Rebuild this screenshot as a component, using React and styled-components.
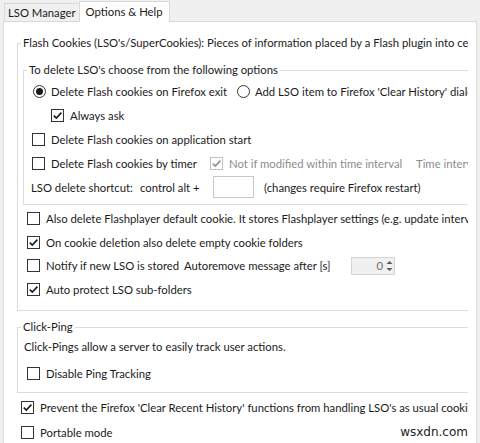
import React from 'react';
import styled, { createGlobalStyle } from 'styled-components';

const GlobalStyle = createGlobalStyle`
  html, body {
    margin: 0;
    padding: 0;
    background: #f0f0f0;
  }
  body {
    font-family: Lato, "Open Sans", sans-serif;
    font-size: 11.3px;
    color: #1b1b1b;
    width: 480px;
    height: 443px;
    overflow: hidden;
  }
`;

const Window = styled.div`
  position: relative;
  width: 480px;
  height: 443px;
  overflow: hidden;
`;

const TabBar = styled.div`
  display: flex;
  align-items: flex-end;
  height: 21px;
  padding-left: 4px;
`;

const Tab = styled.div`
  height: ${p => (p.active ? '21px' : '18px')};
  line-height: ${p => (p.active ? '19px' : '18px')};
  padding: 0 ${p => (p.active ? '6px' : '3px')};
  background: ${p => (p.active ? '#fff' : '#f0f0f0')};
  border: 1px solid #d9d9d9;
  border-bottom: none;
  margin-left: ${p => (p.active ? '-1px' : '0')};
  margin-bottom: ${p => (p.active ? '-1px' : '0')};
  position: relative;
  z-index: ${p => (p.active ? 2 : 1)};
  box-sizing: border-box;
  white-space: nowrap;
  font-size: 11.3px;
`;

const Panel = styled.div`
  margin-left: 3px;
  width: 474px;
  height: 440px;
  box-sizing: border-box;
  background: #fff;
  border: 1px solid #d9d9d9;
  padding-right: 8px;
`;

const Clip = styled.div`
  width: 464px;
  height: 100%;
  overflow: hidden;
`;

const Group = styled.fieldset`
  margin: ${p => p.mt}px 0 0 ${p => p.ml}px;
  width: ${p => p.w}px;
  padding: 0 0 ${p => p.pb}px 0;
  border: 1px solid #dcdcdc;
  min-width: 0;
`;

const Legend = styled.legend`
  margin-left: 3px;
  padding: 0 2px;
  line-height: 16px;
  white-space: nowrap;
`;

const Row = styled.div`
  display: flex;
  align-items: center;
  height: ${p => p.h || 23.5}px;
  margin-top: ${p => p.mt || 0}px;
  padding-left: ${p => p.pl || 0}px;
  white-space: nowrap;
`;

const Label = styled.span`
  color: ${p => (p.disabled ? '#8c8c8c' : '#1b1b1b')};
`;

const Cell = styled.span`
  display: inline-flex;
  align-items: center;
  flex: none;
  width: ${p => p.w}px;
`;

const Box = styled.span`
  flex: none;
  width: 13px;
  height: 13px;
  box-sizing: border-box;
  border: 1px solid ${p => (p.disabled ? '#c2c2c2' : '#333')};
  background: #fff;
  margin-right: 6px;
  display: inline-flex;
  align-items: center;
  justify-content: center;
`;

const Circle = styled.span`
  flex: none;
  width: 13px;
  height: 13px;
  box-sizing: border-box;
  border: 1px solid #333;
  border-radius: 50%;
  background: #fff;
  margin-right: 5px;
  display: inline-flex;
  align-items: center;
  justify-content: center;
  &::after {
    content: '';
    width: 7px;
    height: 7px;
    border-radius: 50%;
    background: ${p => (p.checked ? '#1b1b1b' : 'transparent')};
  }
`;

const KeyInput = styled.span`
  flex: none;
  width: 41px;
  height: 22px;
  box-sizing: border-box;
  border: 1px solid #c8c8c8;
  margin-right: 10px;
`;

const Spin = styled.span`
  display: inline-flex;
  align-items: center;
  justify-content: flex-end;
  flex: none;
  width: 44px;
  height: 18px;
  box-sizing: border-box;
  border: 1px solid #d4d4d4;
  background: #f0f0f0;
  color: #6d6d6d;
`;

const SpinArrows = styled.span`
  display: flex;
  width: 9px;
  height: 16px;
  margin-left: 2px;
`;

const Watermark = styled.div`
  position: absolute;
  right: 12px;
  bottom: 4px;
  font-family: "DejaVu Sans", "Noto Sans", sans-serif;
  font-size: 12px;
  color: #222;
`;

function Check({ checked, disabled }) {
  return (
    <Box disabled={disabled}>
      {checked && (
        <svg width="11" height="11" viewBox="0 0 11 11">
          <path d="M1.8 5.6 L4.3 8.1 L9.4 2.6" fill="none" stroke={disabled ? '#8f8f8f' : '#1b1b1b'} strokeWidth="1.6" />
        </svg>
      )}
    </Box>
  );
}

export default function App() {
  return (
    <Window>
      <GlobalStyle />
      <TabBar>
        <Tab>LSO Manager</Tab>
        <Tab active>Options &amp; Help</Tab>
      </TabBar>
      <Panel>
        <Clip>
          <Group mt={13} ml={13} w={520} pb={9}>
            <Legend>Flash Cookies (LSO's/SuperCookies): Pieces of information placed by a Flash plugin into certain folders</Legend>
            <Group mt={11} ml={5} w={520} pb={5}>
              <Legend>To delete LSO's choose from the following options</Legend>
              <Row h={24} mt={1} pl={9}>
                <Cell w={204}>
                  <Circle checked />
                  <Label>Delete Flash cookies on Firefox exit</Label>
                </Cell>
                <Circle />
                <Label>Add LSO item to Firefox 'Clear History' dialog</Label>
              </Row>
              <Row h={24} pl={27}>
                <Check checked />
                <Label>Always ask</Label>
              </Row>
              <Row h={24} pl={8}>
                <Check />
                <Label>Delete Flash cookies on application start</Label>
              </Row>
              <Row h={24} pl={8}>
                <Cell w={178}>
                  <Check />
                  <Label>Delete Flash cookies by timer</Label>
                </Cell>
                <Cell w={206}>
                  <Check checked disabled />
                  <Label disabled>Not if modified within time interval</Label>
                </Cell>
                <Label disabled>Time interval</Label>
              </Row>
              <Row h={24} pl={7}>
                <Cell w={109}>
                  <Label>LSO delete shortcut:</Label>
                </Cell>
                <Cell w={73}>
                  <Label>control alt +</Label>
                </Cell>
                <KeyInput />
                <Label>(changes require Firefox restart)</Label>
              </Row>
            </Group>
            <Row mt={2} pl={9}>
              <Check />
              <Label>Also delete Flashplayer default cookie. It stores Flashplayer settings (e.g. update interval)</Label>
            </Row>
            <Row pl={9}>
              <Check checked />
              <Label>On cookie deletion also delete empty cookie folders</Label>
            </Row>
            <Row pl={9}>
              <Cell w={157}>
                <Check />
                <Label>Notify if new LSO is stored</Label>
              </Cell>
              <Cell w={167}>
                <Label>Autoremove message after [s]</Label>
              </Cell>
              <Spin>
                0
                <SpinArrows>
                  <svg width="9" height="16" viewBox="0 0 9 16">
                    <path d="M1.5 6 L4.5 3 L7.5 6 Z" fill="#5a5a5a" />
                    <path d="M1.5 10 L4.5 13 L7.5 10 Z" fill="#5a5a5a" />
                  </svg>
                </SpinArrows>
              </Spin>
            </Row>
            <Row pl={9}>
              <Check checked />
              <Label>Auto protect LSO sub-folders</Label>
            </Row>
          </Group>
          <Group mt={8} ml={13} w={520} pb={7}>
            <Legend>Click-Ping</Legend>
            <Row h={23} pl={6}>
              <Label>Click-Pings allow a server to easily track user actions.</Label>
            </Row>
            <Row h={24} mt={3} pl={9}>
              <Check />
              <Label>Disable Ping Tracking</Label>
            </Row>
          </Group>
          <Row h={25} mt={2} pl={17}>
            <Check checked />
            <Label>Prevent the Firefox 'Clear Recent History' functions from handling LSO's as usual cookies</Label>
          </Row>
          <Row h={24} pl={17}>
            <Check />
            <Label>Portable mode</Label>
          </Row>
        </Clip>
      </Panel>
      <Watermark>wsxdn.com</Watermark>
    </Window>
  );
}
